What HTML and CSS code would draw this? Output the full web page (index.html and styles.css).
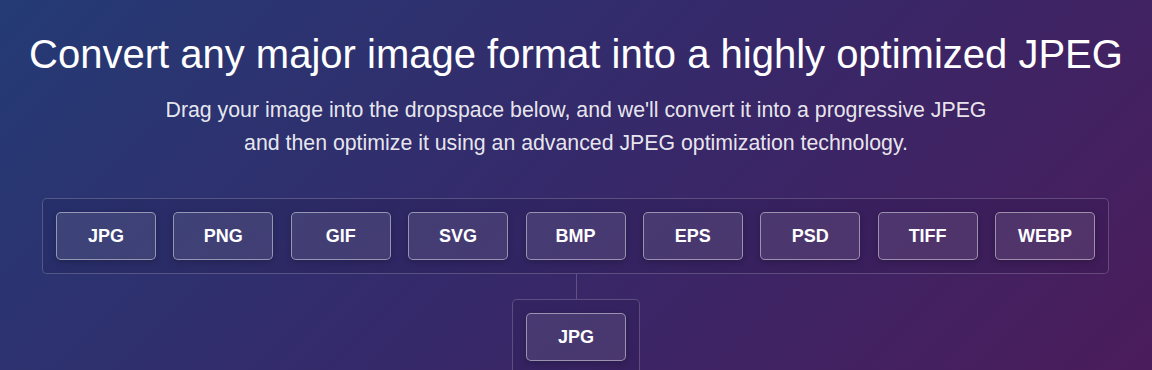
FILE: index.html
```html
<!DOCTYPE html>
<html lang="en">
<head>
    <meta charset="UTF-8">
    <meta name="viewport" content="width=device-width, initial-scale=1.0">
    <title>JPEG Optimizer</title>
    <link rel="stylesheet" href="styles.css">
</head>
<body>
    <div class="hero">
        <h1>Convert any major image format into a highly optimized JPEG</h1>
        <p class="lead">
            Drag your image into the dropspace below, and we'll convert it into a progressive JPEG<br>
            and then optimize it using an advanced JPEG optimization technology.
        </p>

        <!-- input formats -->
        <div class="format-box">
            <div class="format">JPG</div>
            <div class="format">PNG</div>
            <div class="format">GIF</div>
            <div class="format">SVG</div>
            <div class="format">BMP</div>
            <div class="format">EPS</div>
            <div class="format">PSD</div>
            <div class="format">TIFF</div>
            <div class="format">WEBP</div>
        </div>

        <div class="connector"></div>

        <!-- output format -->
        <div class="output-box">
            <div class="format">JPG</div>
        </div>
    </div>
</body>
</html>
```

FILE: styles.css
```css
html, body {
    margin: 0;
    height: 100%;
}
body {
    font-family: "Liberation Sans", Arial, sans-serif;
    color: white;
    background: linear-gradient(135deg, #243b75 0%, #36296a 50%, #4b1c5b 100%);
    overflow: hidden;
}
.hero {
    display: flex;
    flex-direction: column;
    align-items: center;
    padding-top: 32px;
}
h1 {
    margin: 0;
    font-size: 40px;
    font-weight: normal;
    line-height: 45px;
    text-align: center;
}
.lead {
    margin: 17px 0 0;
    font-size: 21.3px;
    line-height: 33px;
    text-align: center;
    color: rgba(255, 255, 255, 0.9);
}
.format-box {
    align-self: stretch;
    margin: 38px 43px 0 42px;
    padding: 13px;
    display: flex;
    justify-content: space-between;
    border: 1px solid rgba(255, 255, 255, 0.2);
    border-radius: 5px;
    background: rgba(20, 10, 50, 0.12);
}
.format {
    width: 98px;
    height: 46px;
    display: flex;
    align-items: center;
    justify-content: center;
    font-size: 18px;
    font-weight: bold;
    border: 1px solid rgba(255, 255, 255, 0.45);
    border-radius: 5px;
    background: rgba(255, 255, 255, 0.1);
    box-shadow: 0 2px 6px rgba(0, 0, 0, 0.2);
}
.connector {
    width: 1px;
    height: 25px;
    background: rgba(255, 255, 255, 0.2);
}
.output-box {
    padding: 13px;
    height: 60px;
    border: 1px solid rgba(255, 255, 255, 0.2);
    border-bottom: none;
    border-radius: 5px 5px 0 0;
    background: rgba(20, 10, 50, 0.12);
}
```
